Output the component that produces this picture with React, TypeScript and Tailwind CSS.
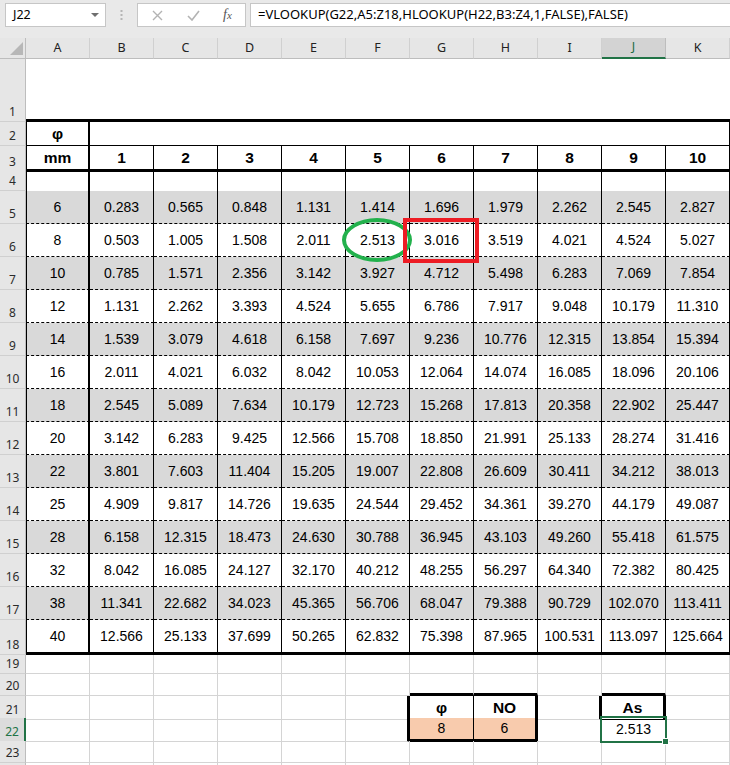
import React from "react";

const COLS = ["A", "B", "C", "D", "E", "F", "G", "H", "I", "J", "K"];
const DIAS = [6, 8, 10, 12, 14, 16, 18, 20, 22, 25, 28, 32, 38, 40];
const NUMS = [1, 2, 3, 4, 5, 6, 7, 8, 9, 10];
const area = (d: number, n: number) => ((Math.PI * d * d) / 400 * n).toFixed(3);

const GRID_COLS = "grid grid-cols-[26px_64px_repeat(10,64px)]";

// cell borders
const GRID_R = "border-r border-r-[#d4d4d4]";
const GRID_B = "border-b border-b-[#d4d4d4]";
const BLK_R = "border-r border-r-black";
const MED_R = "border-r-2 border-r-black";
const THK_R = "border-r-[3px] border-r-black";
const BLK_B = "border-b border-b-black";
const DSH_B = "border-b border-b-black [border-bottom-style:dashed]";
const THK_B = "border-b-[3px] border-b-black";
const BLK_L = "border-l border-l-black";

function Cell({ cls, bold, children }: { cls: string; bold?: boolean; children?: React.ReactNode }) {
  return (
    <div
      className={`flex items-center justify-center font-['Liberation_Sans',Arial,sans-serif] text-black ${
        bold ? "font-bold text-[15.5px]" : "text-[14px]"
      } ${cls}`}>
      {children}
    </div>
  );
}

function Row({ n, h, sel, children }: { n?: number; h: string; sel?: boolean; children?: React.ReactNode }) {
  return (
    <div className={`${GRID_COLS} ${h}`}>
      <div
        className={`flex items-end justify-center pb-[3px] leading-none border-b border-b-[#d0d0d0] font-['Noto_Sans',sans-serif] text-[12px] ${
          sel ? "bg-[#dcdcdc] border-r-2 border-r-[#217346] text-[#217346]" : "bg-[#e6e6e6] border-r border-r-[#bdbdbd] text-[#2b2b2b]"
        }`}>
        {n}
      </div>
      {children}
    </div>
  );
}

function GridRow({ n, h }: { n?: number; h: string }) {
  return (
    <Row n={n} h={h}>
      {COLS.map((c) => (
        <Cell key={c} cls={`${GRID_R} ${GRID_B}`} />
      ))}
    </Row>
  );
}

export default function App() {
  return (
    <div className="relative w-[730px] h-[765px] overflow-hidden bg-white">
      {/* formula bar */}
      <div className="h-[38px] bg-[#e9e9e9] flex items-start pt-[3px] pl-[5px] font-['Noto_Sans',sans-serif]">
        <div className="w-[101px] h-[24px] shrink-0 bg-white border border-[#c6c6c6] flex items-center justify-between pl-[7px] pr-[6px]">
          <span className="text-[12.5px] text-black">J22</span>
          <svg width="8" height="4" viewBox="0 0 8 4">
            <path d="M0 0h8L4 4z" fill="#6f6f6f" />
          </svg>
        </div>
        <div className="w-[31px] h-[24px] shrink-0 flex items-center justify-center">
          <svg width="3" height="12" viewBox="0 0 3 12">
            <rect x="0.5" y="1" width="2" height="2" fill="#b5b5b5" />
            <rect x="0.5" y="5" width="2" height="2" fill="#b5b5b5" />
            <rect x="0.5" y="9" width="2" height="2" fill="#b5b5b5" />
          </svg>
        </div>
        <div className="w-[109px] h-[24px] shrink-0 bg-white border border-[#c6c6c6] flex items-center">
          <svg className="ml-[14px]" width="11" height="11" viewBox="0 0 11 11">
            <path d="M1 1l9 9M10 1l-9 9" stroke="#b3b3b3" strokeWidth="1.4" />
          </svg>
          <svg className="ml-[24px]" width="13" height="11" viewBox="0 0 13 11">
            <path d="M1 6l4 4 7-9" stroke="#b3b3b3" strokeWidth="1.6" fill="none" />
          </svg>
          <span className="ml-[23px] font-['Liberation_Serif',serif] italic text-[14px] text-[#555] leading-none">
            f<span className="text-[11px]">x</span>
          </span>
        </div>
        <div className="ml-[4px] w-[482px] h-[24px] shrink-0 bg-white border border-[#c6c6c6] flex items-center pl-[7px]">
          <span className="text-[13px] text-black whitespace-nowrap">
            =VLOOKUP(G22,A5:Z18,HLOOKUP(H22,B3:Z4,1,FALSE),FALSE)
          </span>
        </div>
      </div>

      {/* column headers */}
      <div className={`${GRID_COLS} h-[20px] font-['Noto_Sans',sans-serif] text-[12.5px]`}>
        <div className="relative bg-[#e6e6e6] border-r border-r-[#bdbdbd] border-b border-b-[#bdbdbd]">
          <svg className="absolute left-0 top-0" width="26" height="20" viewBox="0 0 26 20">
            <path d="M10 17h13V4z" fill="#b7b7b7" />
          </svg>
        </div>
        {COLS.map((c) =>
          c === "J" ? (
            <div key={c} className="flex items-center justify-center bg-[#d3d3d3] border-r border-r-[#bdbdbd] border-b-2 border-b-[#217346] text-[#1e6b41]">
              {c}
            </div>
          ) : (
            <div key={c} className="flex items-center justify-center bg-[#e6e6e6] border-r border-r-[#d0d0d0] border-b border-b-[#bdbdbd] text-[#222]">
              {c}
            </div>
          )
        )}
      </div>

      {/* row 1 */}
      <Row n={1} h="h-[64px]">
        {COLS.map((c) => (
          <Cell key={c} cls={THK_B} />
        ))}
      </Row>

      {/* row 2 */}
      <Row n={2} h="h-[24px]">
        <Cell bold cls={`${BLK_L} ${MED_R} ${BLK_B}`}>φ</Cell>
        <Cell cls={`col-span-10 ${BLK_R} ${BLK_B}`} />
      </Row>

      {/* row 3 */}
      <Row n={3} h="h-[24px]">
        <Cell bold cls={`${BLK_L} ${MED_R} ${THK_B}`}>mm</Cell>
        {NUMS.map((n) => (
          <Cell key={n} bold cls={`${BLK_R} ${THK_B}`}>
            {n}
          </Cell>
        ))}
      </Row>

      {/* row 4 */}
      <Row n={4} h="h-[21px]">
        <Cell cls={`${BLK_L} ${MED_R}`} />
        {NUMS.map((n) => (
          <Cell key={n} cls={BLK_R} />
        ))}
      </Row>

      {/* data rows 5-18 */}
      {DIAS.map((d, i) => {
        const last = i === DIAS.length - 1;
        const bg = i % 2 === 0 ? "bg-[#d9d9d9]" : "bg-white";
        const b = last ? THK_B : DSH_B;
        return (
          <Row key={d} n={i + 5} h={last ? "h-[35px]" : "h-[33px]"}>
            <Cell cls={`${bg} ${BLK_L} ${MED_R} ${b}`}>{d}</Cell>
            {NUMS.map((n) => (
              <Cell key={n} cls={`${bg} ${BLK_R} ${b}`}>
                {area(d, n)}
              </Cell>
            ))}
          </Row>
        );
      })}

      <GridRow n={19} h="h-[19px]" />

      {/* row 20 */}
      <Row n={20} h="h-[22px]">
        {COLS.map((c) => (
          <Cell key={c} cls={`${GRID_R} ${c === "G" || c === "H" || c === "J" ? THK_B : GRID_B}`} />
        ))}
      </Row>

      {/* row 21 */}
      <Row n={21} h="h-[22px]">
        <Cell cls={`${GRID_R} ${GRID_B}`} />
        <Cell cls={`${GRID_R} ${GRID_B}`} />
        <Cell cls={`${GRID_R} ${GRID_B}`} />
        <Cell cls={`${GRID_R} ${GRID_B}`} />
        <Cell cls={`${GRID_R} ${GRID_B}`} />
        <Cell cls={`${THK_R} ${GRID_B}`} />
        <Cell bold cls={`${BLK_R} ${BLK_B}`}>φ</Cell>
        <Cell bold cls={`${THK_R} ${BLK_B}`}>NO</Cell>
        <Cell cls={`${THK_R} ${GRID_B}`} />
        <Cell bold cls={`${THK_R} ${BLK_B}`}>As</Cell>
        <Cell cls={`${GRID_R} ${GRID_B}`} />
      </Row>

      {/* row 22 */}
      <Row n={22} h="h-[23px]" sel>
        <Cell cls={`${GRID_R} ${GRID_B}`} />
        <Cell cls={`${GRID_R} ${GRID_B}`} />
        <Cell cls={`${GRID_R} ${GRID_B}`} />
        <Cell cls={`${GRID_R} ${GRID_B}`} />
        <Cell cls={`${GRID_R} ${GRID_B}`} />
        <Cell cls={`${THK_R} ${GRID_B}`} />
        <Cell cls={`bg-[#f8cbad] ${BLK_R} ${THK_B}`}>8</Cell>
        <Cell cls={`bg-[#f8cbad] ${THK_R} ${THK_B}`}>6</Cell>
        <Cell cls={`${GRID_R} ${GRID_B}`} />
        <Cell cls={`${GRID_R} ${GRID_B}`}>2.513</Cell>
        <Cell cls={`${GRID_R} ${GRID_B}`} />
      </Row>

      <GridRow n={23} h="h-[22px]" />
      <GridRow h="h-[22px]" />

      {/* annotations */}
      <div className="absolute left-[342px] top-[218px] w-[70px] h-[44px] rounded-[50%] border-4 border-[#22b14c]" />
      <div className="absolute left-[403px] top-[218px] w-[76px] h-[45px] border-4 border-[#ed1c24]" />

      {/* active cell J22 */}
      <div className="absolute left-[600px] top-[716px] w-[67px] h-[27px] border-2 border-[#217346]" />
      <div className="absolute left-[662px] top-[738px] w-[7px] h-[7px] bg-[#217346] border border-white" />
    </div>
  );
}
